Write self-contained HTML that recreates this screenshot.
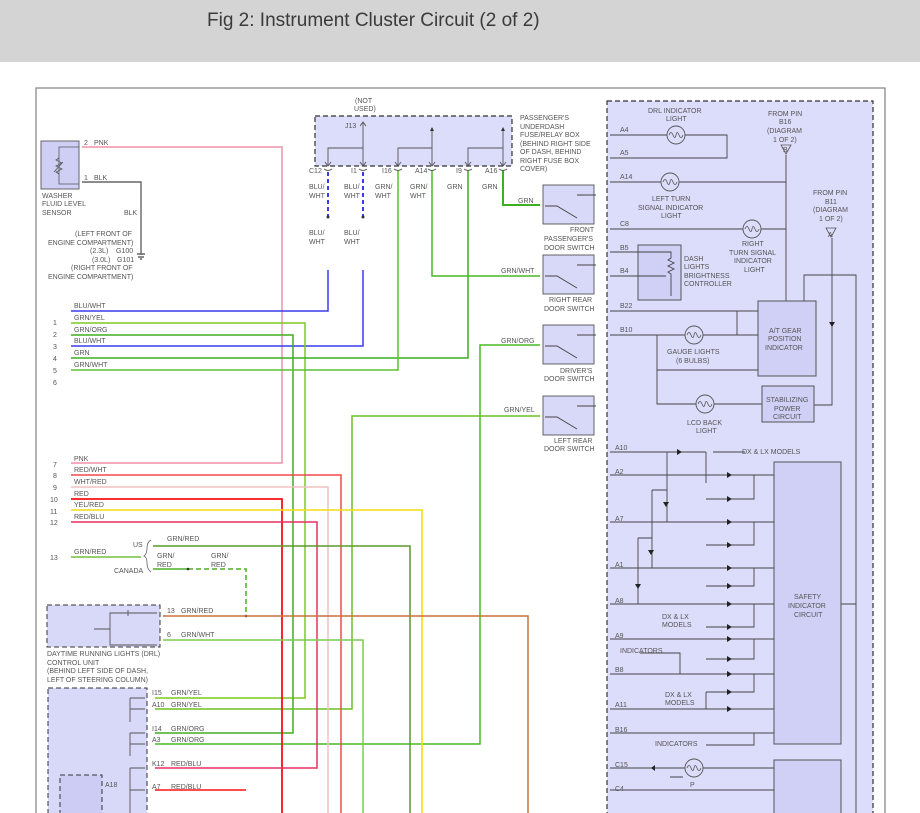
<!DOCTYPE html>
<html><head><meta charset="utf-8"><style>
html,body{margin:0;padding:0;background:#fff;width:920px;height:813px;overflow:hidden}
.hd{position:absolute;left:0;top:0;width:920px;height:62px;background:#d4d4d4}
.hd span{position:absolute;left:207px;top:10px;font:19px "Liberation Sans",sans-serif;color:#3a3a3a}
svg{position:absolute;left:0;top:0}
text{font-family:"Liberation Sans",sans-serif;font-size:7px;fill:#555}
</style></head><body>
<div class="hd"><span>Fig 2: Instrument Cluster Circuit (2 of 2)</span></div>
<svg width="920" height="813" viewBox="0 0 920 813">
<!-- outer frame -->
<path d="M36 813V88H885V813" fill="none" stroke="#888" stroke-width="1.3"/>
<!-- right big box -->
<rect x="607" y="101" width="266" height="720" fill="#dcdcfb" stroke="#333" stroke-width="1.2" stroke-dasharray="5,3"/>
<!-- J13 box -->
<rect x="315" y="116" width="197" height="50" fill="#dcdcfb" stroke="#333" stroke-width="1.2" stroke-dasharray="5,3"/>
<!-- washer sensor -->
<rect x="41" y="141" width="38" height="48" fill="#cfcff5" stroke="#666"/>
<path d="M79 147H59V184H79M59 158l-3 2 6 3-6 3 6 3-6 3 3 2M54 172l9-10" fill="none" stroke="#555" stroke-width="0.8"/>
<text x="84" y="145">2</text><text x="94" y="145">PNK</text>
<text x="84" y="180">1</text><text x="94" y="180">BLK</text>
<text x="42" y="198">WASHER</text><text x="42" y="206">FLUID LEVEL</text><text x="42" y="215">SENSOR</text>
<text x="124" y="215">BLK</text>
<text x="75" y="236">(LEFT FRONT OF</text><text x="48" y="245">ENGINE COMPARTMENT)</text>
<text x="90" y="253">(2.3L)</text><text x="116" y="253">G100</text>
<text x="92" y="262">(3.0L)</text><text x="117" y="262">G101</text>
<text x="71" y="270">(RIGHT FRONT OF</text><text x="48" y="279">ENGINE COMPARTMENT)</text>
<path d="M82 182H141V255M137 254h8M138 257h6M140 259h2" fill="none" stroke="#666" stroke-width="1.4"/>
<!-- pink -->
<path d="M82 147H282V463H71" fill="none" stroke="#f291a8" stroke-width="1.5"/>
<!-- rows 1-6 labels -->
<g>
<text x="53" y="325">1</text><text x="53" y="337">2</text><text x="53" y="349">3</text><text x="53" y="361">4</text><text x="53" y="373">5</text><text x="53" y="385">6</text>
<text x="74" y="308">BLU/WHT</text><text x="74" y="320">GRN/YEL</text><text x="74" y="332">GRN/ORG</text><text x="74" y="343">BLU/WHT</text><text x="74" y="355">GRN</text><text x="74" y="367">GRN/WHT</text>
</g>
<path d="M71 311H328V270" fill="none" stroke="#3b3bee" stroke-width="1.5"/>
<path d="M328 218V170" fill="none" stroke="#3b3bee" stroke-width="2" stroke-dasharray="4,3"/>
<path d="M71 346H363V270" fill="none" stroke="#3b3bee" stroke-width="1.5"/>
<path d="M363 218V170" fill="none" stroke="#3b3bee" stroke-width="2" stroke-dasharray="4,3"/>
<circle cx="328" cy="217" r="1.5" fill="#333"/><circle cx="363" cy="217" r="1.5" fill="#333"/>
<path d="M71 323H305V698H155" fill="none" stroke="#80c820" stroke-width="1.5"/>
<path d="M71 335H293V733H155" fill="none" stroke="#42ae1e" stroke-width="1.5"/>
<path d="M71 358H468V170" fill="none" stroke="#3cb020" stroke-width="1.5"/>
<path d="M71 370H398V170" fill="none" stroke="#5cc030" stroke-width="1.5"/>
<path d="M432 170V276H540" fill="none" stroke="#48b824" stroke-width="1.5"/>
<path d="M503 170V205H540" fill="none" stroke="#3cb020" stroke-width="2"/>
<path d="M540 345H480V744H155" fill="none" stroke="#48b824" stroke-width="1.5"/>
<path d="M540 416H352V709H155" fill="none" stroke="#6cc020" stroke-width="1.5"/>
<!-- J13 internals -->
<g fill="none" stroke="#555" stroke-width="0.9">
<path d="M328 166V148H363M363 166V122M398 166V148H432M432 166V130M468 166V148H503M503 166V130M360 126l3-4 3 4"/>
<path d="M325 162l3 4 3-4M360 162l3 4 3-4M395 162l3 4 3-4M429 162l3 4 3-4M465 162l3 4 3-4M500 162l3 4 3-4"/>
<path d="M324 169q4 3 8 0M359 169q4 3 8 0M394 169q4 3 8 0M428 169q4 3 8 0M464 169q4 3 8 0M499 169q4 3 8 0"/>
</g>
<path d="M430 131l2-4 2 4zM501 131l2-4 2 4z" fill="#333"/>
<text x="355" y="103">(NOT</text><text x="354" y="111">USED)</text><text x="345" y="128">J13</text>
<text x="309" y="173">C12</text><text x="351" y="173">I1</text><text x="382" y="173">I16</text><text x="415" y="173">A14</text><text x="456" y="173">I9</text><text x="485" y="173">A16</text>
<text x="309" y="189">BLU/</text><text x="309" y="198">WHT</text><text x="344" y="189">BLU/</text><text x="344" y="198">WHT</text>
<text x="375" y="189">GRN/</text><text x="375" y="198">WHT</text><text x="410" y="189">GRN/</text><text x="410" y="198">WHT</text>
<text x="447" y="189">GRN</text><text x="482" y="189">GRN</text>
<text x="309" y="235">BLU/</text><text x="309" y="244">WHT</text><text x="344" y="235">BLU/</text><text x="344" y="244">WHT</text>
<text x="520" y="120">PASSENGER'S</text><text x="520" y="129">UNDERDASH</text><text x="520" y="137">FUSE/RELAY BOX</text><text x="520" y="146">(BEHIND RIGHT SIDE</text><text x="520" y="154">OF DASH, BEHIND</text><text x="520" y="163">RIGHT FUSE BOX</text><text x="520" y="171">COVER)</text>
<!-- door switches -->
<g fill="#d8d8f8" stroke="#555" stroke-width="0.9">
<rect x="543" y="185" width="51" height="39"/><rect x="543" y="255" width="51" height="39"/><rect x="543" y="325" width="51" height="39"/><rect x="543" y="396" width="51" height="39"/>
</g>
<g fill="none" stroke="#444" stroke-width="0.9">
<path d="M545 206H557L577 218M577 195H596M545 276H557L577 288M577 265H596M545 346H557L577 358M577 335H596M545 417H557L577 429M577 406H596"/>
</g>
<text x="518" y="203">GRN</text><text x="501" y="273">GRN/WHT</text><text x="501" y="343">GRN/ORG</text><text x="504" y="412">GRN/YEL</text>
<text x="570" y="232">FRONT</text><text x="544" y="241">PASSENGER'S</text><text x="544" y="250">DOOR SWITCH</text>
<text x="549" y="302">RIGHT REAR</text><text x="544" y="311">DOOR SWITCH</text>
<text x="560" y="373">DRIVER'S</text><text x="544" y="381">DOOR SWITCH</text>
<text x="554" y="443">LEFT REAR</text><text x="544" y="451">DOOR SWITCH</text>
<!-- rows 7-12 -->
<text x="53" y="467">7</text><text x="53" y="478">8</text><text x="53" y="490">9</text><text x="50" y="502">10</text><text x="50" y="514">11</text><text x="50" y="525">12</text>
<text x="74" y="461">PNK</text><text x="74" y="472">RED/WHT</text><text x="74" y="484">WHT/RED</text><text x="74" y="496">RED</text><text x="74" y="507">YEL/RED</text><text x="74" y="519">RED/BLU</text>
<path d="M71 475H341V813" fill="none" stroke="#f24848" stroke-width="1.5"/>
<path d="M71 487H328V813" fill="none" stroke="#f0c0c0" stroke-width="1.5"/>
<path d="M71 499H282V813" fill="none" stroke="#ff1010" stroke-width="1.8"/>
<path d="M71 510H422V813" fill="none" stroke="#f2de10" stroke-width="1.6"/>
<path d="M71 522H317V768H155" fill="none" stroke="#e83060" stroke-width="1.5"/>
<path d="M155 790H246" fill="none" stroke="#ff1010" stroke-width="1.6"/>
<!-- row 13 -->
<text x="50" y="560">13</text><text x="74" y="554">GRN/RED</text>
<path d="M71 557H141" stroke="#70c040" stroke-width="1.5"/>
<path d="M153 546H410V813" fill="none" stroke="#5a9a28" stroke-width="1.5"/>
<path d="M153 569H188" stroke="#48b024" stroke-width="1.5"/>
<path d="M188 569H246V616" fill="none" stroke="#48b024" stroke-width="1.5" stroke-dasharray="5,3"/>
<circle cx="188" cy="569" r="1.3" fill="#333"/><circle cx="246" cy="616" r="1.3" fill="#333"/>
<path d="M151 540q-4 2-4 8t-3 8q3 1 3 7t4 9" fill="none" stroke="#666" stroke-width="0.8"/>
<text x="133" y="547">US</text><text x="114" y="573">CANADA</text><text x="167" y="541">GRN/RED</text>
<text x="157" y="558">GRN/</text><text x="157" y="567">RED</text><text x="211" y="558">GRN/</text><text x="211" y="567">RED</text>
<path d="M163 616H528V813" fill="none" stroke="#c87238" stroke-width="1.5"/>
<path d="M163 640H363V813" fill="none" stroke="#7ccc50" stroke-width="1.5"/>
<rect x="47" y="605" width="113" height="42" fill="#d8d8f8" stroke="#333" stroke-dasharray="5,3"/>
<path d="M110 629H94M110 629V613H157M110 629V645H157M128 610v6" fill="none" stroke="#555" stroke-width="0.9"/>
<text x="167" y="613">13</text><text x="181" y="613">GRN/RED</text><text x="167" y="637">6</text><text x="181" y="637">GRN/WHT</text>
<text x="47" y="656">DAYTIME RUNNING LIGHTS (DRL)</text><text x="47" y="665">CONTROL UNIT</text><text x="47" y="673">(BEHIND LEFT SIDE OF DASH,</text><text x="47" y="682">LEFT OF STEERING COLUMN)</text>
<rect x="48" y="688" width="99" height="140" fill="#d8d8f8" stroke="#333" stroke-dasharray="5,3"/>
<rect x="60" y="775" width="42" height="50" fill="#ccccf5" stroke="#333" stroke-dasharray="5,3"/>
<path d="M130 698H145M130 698V722M130 709H145M130 733H145M130 733V756M130 744H145M130 768H145M130 768V813M130 790H145" fill="none" stroke="#555" stroke-width="0.9"/>
<text x="152" y="695">I15</text><text x="171" y="695">GRN/YEL</text><text x="152" y="707">A10</text><text x="171" y="707">GRN/YEL</text>
<text x="152" y="731">I14</text><text x="171" y="731">GRN/ORG</text><text x="152" y="742">A3</text><text x="171" y="742">GRN/ORG</text>
<text x="152" y="766">K12</text><text x="171" y="766">RED/BLU</text><text x="152" y="789">A7</text><text x="171" y="789">RED/BLU</text><text x="105" y="787">A18</text>
<!-- right box internals -->
<g fill="none" stroke="#444" stroke-width="0.9">
<path d="M610 135H727V158H610M610 182H786M610 229H786M786 155V302M610 252H671V280M610 276H666"/>
<path d="M610 311H758M610 335H758M737 311V335M657 335V404H700M657 370H758M712 404H762M832 238V405H814M804 302V275H856V813"/>
<path d="M610 452H706M706 452V483M706 475H774M706 522H774M706 568H774M706 604H774M706 639H774M706 674H774M706 709H774M610 475H706M610 522H706M610 568H706M610 604H706M610 639H706M610 674H706M610 709H706M610 733H774M610 768H774M610 790H774M841 604H856"/>
<path d="M706 499H754V475M706 545H754V522M706 586H754V568M706 627H754V604M706 659H754V639M706 692H754V674M706 692V709"/>
<path d="M667 452V522M652 490V568M638 538V604M652 490H667M638 538H652M713 452H745M667 452H706"/>
<path d="M683 777H670M640 653H680V674"/>
</g>
<rect x="638" y="245" width="43" height="55" fill="#d0d0f7" stroke="#555"/>
<path d="M610 252H671V258l-3 2 6 3-6 3 6 3-6 3 3 2V296M610 276H666" fill="none" stroke="#444" stroke-width="0.9"/>
<rect x="758" y="301" width="58" height="75" fill="#d0d0f7" stroke="#555"/>
<rect x="762" y="386" width="52" height="36" fill="#d0d0f7" stroke="#555"/>
<rect x="774" y="462" width="67" height="282" fill="#d0d0f7" stroke="#555"/>
<rect x="774" y="760" width="67" height="60" fill="#d0d0f7" stroke="#555"/>
<!-- bulbs -->
<g fill="#dcdcfb" stroke="#555" stroke-width="0.9">
<circle cx="676" cy="135" r="9"/><circle cx="670" cy="182" r="9"/><circle cx="752" cy="229" r="9"/><circle cx="694" cy="335" r="9"/><circle cx="705" cy="404" r="9"/><circle cx="694" cy="768" r="9"/>
</g>
<g fill="none" stroke="#555" stroke-width="0.8">
<path d="M669 135q2-5 4 0t3 0 3 0 4 0M663 182q2-5 4 0t3 0 3 0 4 0M745 229q2-5 4 0t3 0 3 0 4 0M687 335q2-5 4 0t3 0 3 0 4 0M698 404q2-5 4 0t3 0 3 0 4 0M687 768q2-5 4 0t3 0 3 0 4 0"/>
<path d="M781 145h10l-5 9zM826 228h10l-5 9z"/>
</g>
<!-- diodes -->
<g fill="#222">
<path d="M677 449v6l5-3zM727 472v6l5-3zM727 496v6l5-3zM727 519v6l5-3zM727 542v6l5-3zM727 565v6l5-3zM727 583v6l5-3zM727 601v6l5-3zM727 624v6l5-3zM727 636v6l5-3zM727 656v6l5-3zM727 671v6l5-3zM727 689v6l5-3zM727 706v6l5-3zM663 502h6l-3 5zM648 550h6l-3 5zM635 584h6l-3 5zM655 765v6l-4-3zM829 322h6l-3 5z"/>
</g>
<g>
<text x="620" y="132">A4</text><text x="620" y="155">A5</text><text x="620" y="179">A14</text><text x="620" y="226">C8</text><text x="620" y="250">B5</text><text x="620" y="273">B4</text><text x="620" y="308">B22</text><text x="620" y="332">B10</text>
<text x="648" y="113">DRL INDICATOR</text><text x="666" y="121">LIGHT</text>
<text x="768" y="116">FROM PIN</text><text x="779" y="124">B16</text><text x="767" y="133">(DIAGRAM</text><text x="773" y="142">1 OF 2)</text><text x="783" y="152">B</text>
<text x="652" y="201">LEFT TURN</text><text x="638" y="210">SIGNAL INDICATOR</text><text x="661" y="218">LIGHT</text>
<text x="813" y="195">FROM PIN</text><text x="825" y="204">B11</text><text x="813" y="212">(DIAGRAM</text><text x="819" y="221">1 OF 2)</text><text x="828" y="237">A</text>
<text x="742" y="246">RIGHT</text><text x="729" y="255">TURN SIGNAL</text><text x="734" y="263">INDICATOR</text><text x="744" y="272">LIGHT</text>
<text x="684" y="261">DASH</text><text x="684" y="269">LIGHTS</text><text x="684" y="278">BRIGHTNESS</text><text x="684" y="286">CONTROLLER</text>
<text x="769" y="333">A/T GEAR</text><text x="768" y="341">POSITION</text><text x="765" y="350">INDICATOR</text>
<text x="667" y="354">GAUGE LIGHTS</text><text x="676" y="363">(6 BULBS)</text>
<text x="766" y="402">STABILIZING</text><text x="774" y="411">POWER</text><text x="773" y="419">CIRCUIT</text>
<text x="687" y="425">LCD BACK</text><text x="696" y="433">LIGHT</text>
<text x="615" y="450">A10</text><text x="742" y="454">DX &amp; LX MODELS</text><text x="615" y="474">A2</text><text x="615" y="521">A7</text><text x="615" y="567">A1</text><text x="615" y="603">A8</text>
<text x="662" y="619">DX &amp; LX</text><text x="662" y="627">MODELS</text>
<text x="615" y="638">A9</text><text x="620" y="653">INDICATORS</text><text x="615" y="672">B8</text>
<text x="665" y="697">DX &amp; LX</text><text x="665" y="705">MODELS</text>
<text x="615" y="707">A11</text><text x="615" y="732">B16</text><text x="655" y="746">INDICATORS</text>
<text x="615" y="767">C15</text><text x="690" y="787">P</text><text x="615" y="791">C4</text>
<text x="794" y="599">SAFETY</text><text x="788" y="608">INDICATOR</text><text x="794" y="617">CIRCUIT</text>
</g>
<path d="M754 733V745H706" fill="none" stroke="#444" stroke-width="0.9"/>
</svg>
</body></html>
